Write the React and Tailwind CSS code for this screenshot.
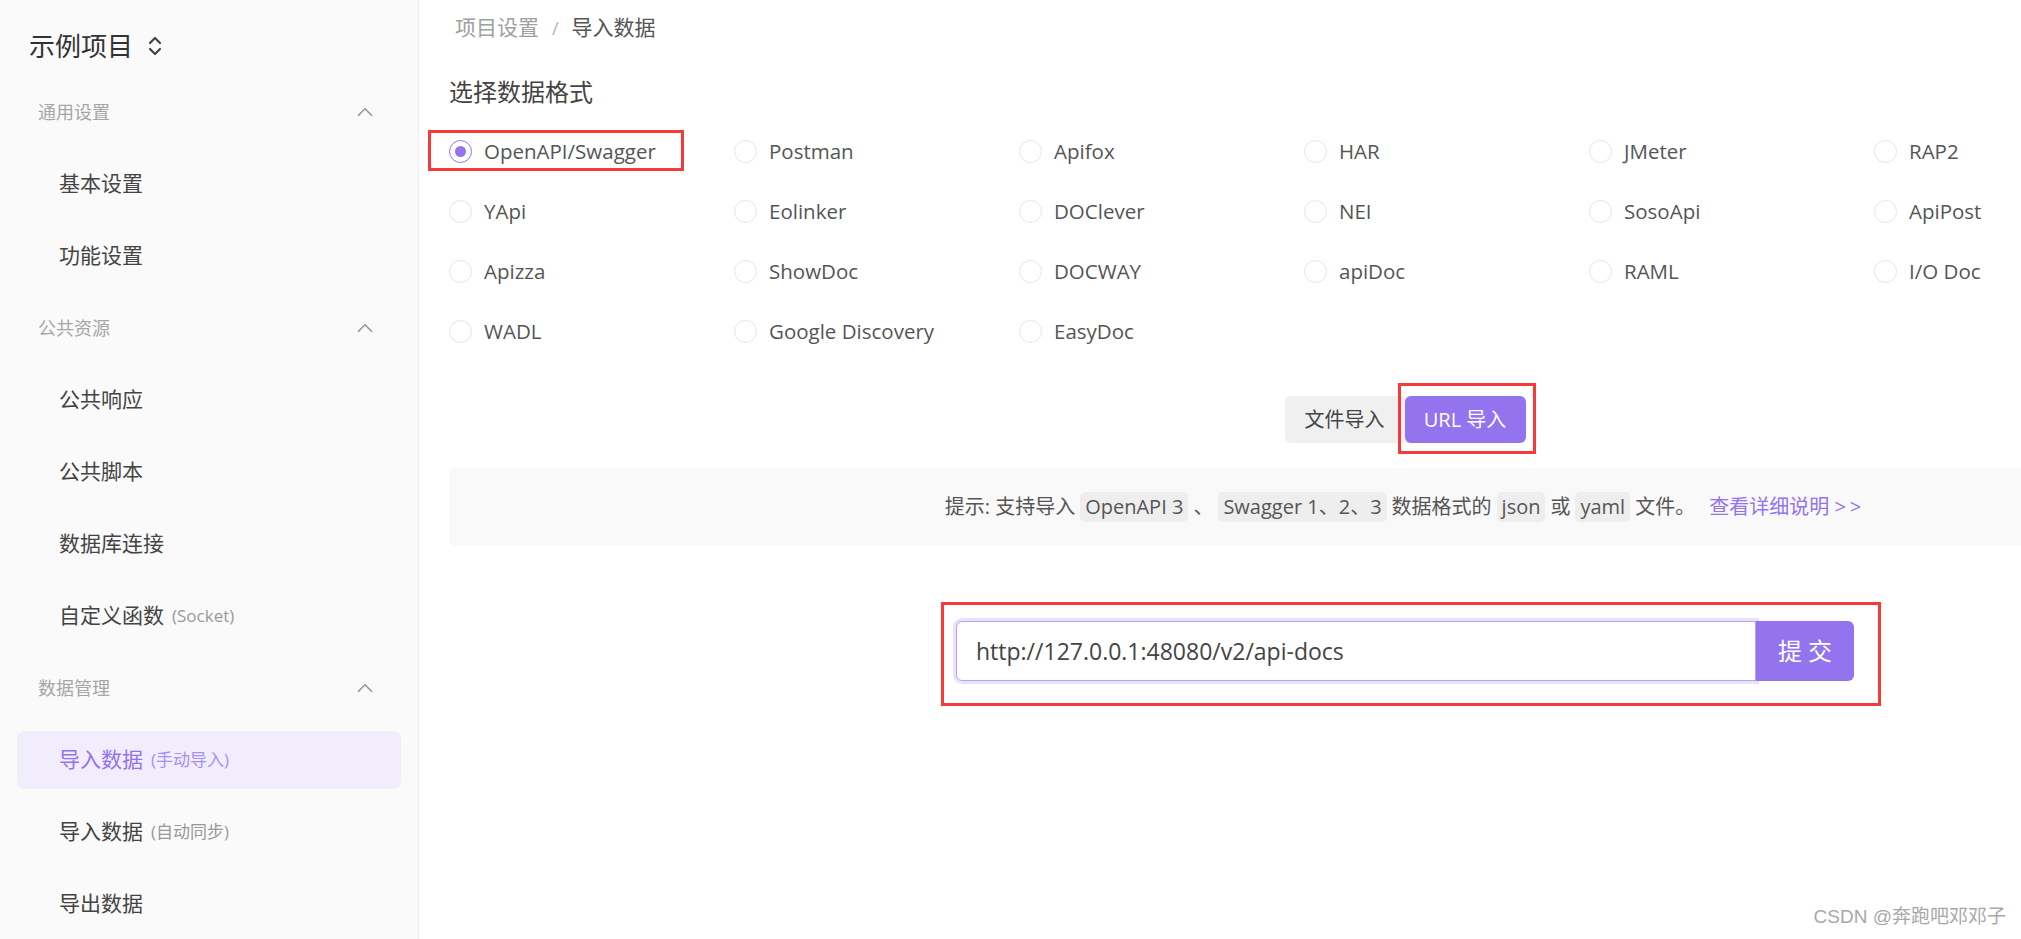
import React from 'react';
import { ChevronUp, ChevronsUpDown } from 'lucide-react';

const formats = [
    'OpenAPI/Swagger', 'Postman', 'Apifox', 'HAR', 'JMeter', 'RAP2',
    'YApi', 'Eolinker', 'DOClever', 'NEI', 'SosoApi', 'ApiPost',
    'Apizza', 'ShowDoc', 'DOCWAY', 'apiDoc', 'RAML', 'I/O Doc',
    'WADL', 'Google Discovery', 'EasyDoc',
];

const menu = [
    { type: 'group', label: '通用设置' },
    { label: '基本设置' },
    { label: '功能设置' },
    { type: 'group', label: '公共资源' },
    { label: '公共响应' },
    { label: '公共脚本' },
    { label: '数据库连接' },
    { label: '自定义函数', sub: '(Socket)' },
    { type: 'group', label: '数据管理' },
    { label: '导入数据', sub: '(手动导入)', active: true },
    { label: '导入数据', sub: '(自动同步)' },
    { label: '导出数据' },
];

function Sidebar() {
    return (
        <aside className="w-[419px] shrink-0 h-full bg-[#fafafa] border-r border-[#efefef]">
            <div className="h-[76px] pt-[26px] pl-[29px] flex items-start">
                <span className="text-[26px] leading-[40px] text-[#333]">示例项目</span>
                <ChevronsUpDown size={24} strokeWidth={2.2} className="ml-[10px] mt-[8px] text-[#444]" />
            </div>

            {menu.map((item, i) => {
                if (item.type === 'group') {
                    return (
                        <div key={i} className="h-[72px] flex items-center justify-between pl-[38px] pr-[40px]">
                            <span className="text-[18px] text-[#a6a6a6]">{item.label}</span>
                            <ChevronUp size={26} strokeWidth={1.6} className="text-[#9a9a9a]" />
                        </div>
                    );
                }
                return (
                    <div key={i} className="h-[72px] px-[17px] py-[7px]">
                        <div className={`h-full rounded-[8px] flex items-center pl-[42px] ${item.active ? 'bg-[#f1edfc]' : ''}`}>
                            <span className={`text-[21px] ${item.active ? 'text-[#9373ee]' : 'text-[#444]'}`}>{item.label}</span>
                            {item.sub && (
                                <span className={`ml-[8px] text-[17px] ${item.active ? 'text-[#a88ff2]' : 'text-[#999]'}`}>{item.sub}</span>
                            )}
                        </div>
                    </div>
                );
            })}
        </aside>
    );
}

function Radio({ label, checked }) {
    return (
        <div className="relative flex items-center h-[60px]">
            {checked ? (
                <span className="w-[23px] h-[23px] rounded-full border-[1.5px] border-[#9373ee] flex items-center justify-center">
                    <span className="w-[11px] h-[11px] rounded-full bg-[#9373ee]"></span>
                </span>
            ) : (
                <span className="w-[23px] h-[23px] rounded-full border border-[#e6e6e6] bg-white"></span>
            )}
            <span className="ml-[12px] text-[20.5px] text-[#555]">{label}</span>
            {checked && (
                <div className="absolute left-[-21px] top-[9px] w-[256px] h-[41px] border-[3px] border-[#f63a3a]"></div>
            )}
        </div>
    );
}

function Chip({ children }) {
    return <span className="inline-block mx-[5px] px-[5px] leading-[30px] rounded-[5px] bg-[#eeeeee]">{children}</span>;
}

export default function App() {
    return (
        <div className="w-[2021px] h-[939px] overflow-hidden relative flex bg-white font-['Open_Sans','Noto_Sans_CJK_SC',sans-serif]">
            <Sidebar />

            <main className="w-[1972px] shrink-0 px-[30px]">
                {/* breadcrumb */}
                <div className="h-[56px] flex items-center pl-[6px] text-[21px]">
                    <span className="text-[#a0a0a0]">项目设置</span>
                    <span className="mx-[13px] text-[#b5b5b5] text-[18px]">/</span>
                    <span className="text-[#555]">导入数据</span>
                </div>

                <h2 className="mt-[20px] text-[24px] leading-[32px] text-[#444]">选择数据格式</h2>

                <div className="mt-[13px] grid grid-cols-[repeat(6,285px)]">
                    {formats.map((f, i) => (
                        <Radio key={f} label={f} checked={i === 0} />
                    ))}
                </div>

                {/* import mode */}
                <div className="mt-[35px] flex justify-center">
                    <div className="flex h-[47px] rounded-[6px] bg-[#f0f0f0]">
                        <button className="w-[120px] text-[20px] text-[#444]">文件导入</button>
                        <div className="relative">
                            <button className="w-[121px] h-full rounded-[6px] bg-[#9373ee] text-white text-[20px]">URL 导入</button>
                            <div className="absolute left-[-7px] right-[-10px] top-[-13px] bottom-[-11px] border-[3px] border-[#f63a3a]"></div>
                        </div>
                    </div>
                </div>

                {/* tips */}
                <div className="mt-[25px] h-[78px] rounded-[6px] bg-[#f9f9f9] flex items-center justify-center text-[20px] text-[#555]">
                    <span>提示: 支持导入</span>
                    <Chip>OpenAPI 3</Chip>
                    <span>、</span>
                    <Chip>Swagger 1、2、3</Chip>
                    <span>数据格式的</span>
                    <Chip>json</Chip>
                    <span>或</span>
                    <Chip>yaml</Chip>
                    <span>文件。</span>
                    <a className="ml-[14px] text-[#9373ee]">查看详细说明 <span className="tracking-[4px]">&gt;&gt;</span></a>
                </div>

                {/* url input */}
                <div className="mt-[75px] flex justify-center">
                    <div className="relative flex h-[60px]">
                        <div className="w-[800px] h-full rounded-l-[6px] border border-[#b7a3f1] ring-[3px] ring-[#e9e2fc] bg-white flex items-center pl-[19px] text-[23px] text-[#444]">
                            http://127.0.0.1:48080/v2/api-docs
                        </div>
                        <button className="w-[98px] h-full rounded-r-[6px] bg-[#9373ee] text-white text-[24px] tracking-[6px] pl-[6px]">提交</button>
                        <div className="absolute left-[-15px] right-[-27px] top-[-19px] bottom-[-25px] border-[3px] border-[#f63a3a]"></div>
                    </div>
                </div>
            </main>

            <div className="absolute right-[15px] bottom-[8px] text-[19px] text-[#a8a8a8] font-['Liberation_Sans','Noto_Sans_CJK_SC',sans-serif] [text-shadow:0_0_2px_#fff]">
                CSDN @奔跑吧邓邓子
            </div>
        </div>
    );
}
